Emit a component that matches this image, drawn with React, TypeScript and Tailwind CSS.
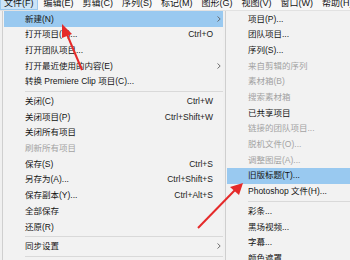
import React from "react";

type Item =
  | { sep: true }
  | { label: string; key?: string; sub?: boolean; off?: boolean; on?: boolean; sep?: false };

const fileMenu: Item[] = [
  { label: "新建(N)", sub: true, on: true },
  { label: "打开项目(P)...", key: "Ctrl+O" },
  { label: "打开团队项目..." },
  { label: "打开最近使用的内容(E)", sub: true },
  { label: "转换 Premiere Clip 项目(C)..." },
  { sep: true },
  { label: "关闭(C)", key: "Ctrl+W" },
  { label: "关闭项目(P)", key: "Ctrl+Shift+W" },
  { label: "关闭所有项目" },
  { label: "刷新所有项目", off: true },
  { label: "保存(S)", key: "Ctrl+S" },
  { label: "另存为(A)...", key: "Ctrl+Shift+S" },
  { label: "保存副本(Y)...", key: "Ctrl+Alt+S" },
  { label: "全部保存" },
  { label: "还原(R)" },
  { sep: true },
  { label: "同步设置", sub: true },
  { sep: true },
];

const newMenu: Item[] = [
  { label: "项目(P)..." },
  { label: "团队项目..." },
  { label: "序列(S)..." },
  { label: "来自剪辑的序列", off: true },
  { label: "素材箱(B)", off: true },
  { label: "搜索素材箱", off: true },
  { label: "已共享项目" },
  { label: "链接的团队项目...", off: true },
  { label: "脱机文件(O)...", off: true },
  { label: "调整图层(A)...", off: true },
  { label: "旧版标题(T)...", on: true },
  { label: "Photoshop 文件(H)..." },
  { sep: true },
  { label: "彩条..." },
  { label: "黑场视频..." },
  { label: "字幕..." },
  { label: "颜色遮罩..." },
];

const bar = ["文件(F)", "编辑(E)", "剪辑(C)", "序列(S)", "标记(M)", "图形(G)", "视图(V)", "窗口(W)", "帮助(H)"];

const Chevron = () => (
  <svg width="4" height="6" viewBox="0 0 4 6" className="shrink-0">
    <path d="M0.5 0.5 L3.2 3 L0.5 5.5" fill="none" stroke="#606060" strokeWidth="0.9" />
  </svg>
);

const Row = ({ item }: { item: Item }) => {
  if (item.sep) {
    return (
      <div className="h-[4px] flex items-center pl-[21px] shrink-0">
        <div className="h-px w-full bg-[#d9d9d9]" />
      </div>
    );
  }
  return (
    <div
      className={`h-[15.7px] flex items-center pl-[21px] shrink-0 ${item.on ? "bg-[#99c9f0]" : ""} ${
        item.off ? "text-[#a3a3a3]" : "text-[#141414]"
      }`}
    >
      <span className="flex-1 whitespace-nowrap">{item.label}</span>
      {item.key && <span className="mr-[10px] whitespace-nowrap text-[#222]">{item.key}</span>}
      {item.sub && (
        <span className="mr-[2px]">
          <Chevron />
        </span>
      )}
    </div>
  );
};

export default function App() {
  return (
    <div
      className="relative w-[350px] h-[260px] overflow-hidden bg-[#f0f0f0] text-[8.5px] leading-none"
      style={{ fontFamily: '"Liberation Sans", "Noto Sans CJK SC", sans-serif' }}
    >
      <div className="h-[11px] overflow-hidden bg-[#f7f7f7] border-b border-[#e2e2e2]">
        <div className="flex -mt-[4px] text-[9px] text-[#141414]">
          {bar.map((b, i) => (
            <div
              key={b}
              className={`h-[14px] flex items-center px-[3px] mr-[3px] whitespace-nowrap ${
                i === 0 ? "bg-[#cce4f7] border border-[#9ccaef]" : ""
              }`}
            >
              {b}
            </div>
          ))}
        </div>
      </div>
      <div className="flex">
        <div className="ml-[2px] w-[221px] border-l border-[#cfcfcf] pl-px flex flex-col bg-[#f2f2f2]">
          {fileMenu.map((it, i) => (
            <Row key={i} item={it} />
          ))}
        </div>
        <div className="ml-[2px] flex-1 border-l border-[#cfcfcf] pl-px flex flex-col bg-[#f2f2f2]">
          {newMenu.map((it, i) => (
            <Row key={i} item={it} />
          ))}
        </div>
      </div>
      <svg className="absolute inset-0 pointer-events-none" width="350" height="260">
        <line x1="82" y1="70" x2="66" y2="32" stroke="#e52a2a" strokeWidth="2" />
        <polygon points="62,24 72,34 62,38" fill="#e52a2a" />
        <line x1="198" y1="228" x2="235" y2="190" stroke="#e52a2a" strokeWidth="2" />
        <polygon points="243,183 239,195 230,187" fill="#e52a2a" />
      </svg>
    </div>
  );
}
